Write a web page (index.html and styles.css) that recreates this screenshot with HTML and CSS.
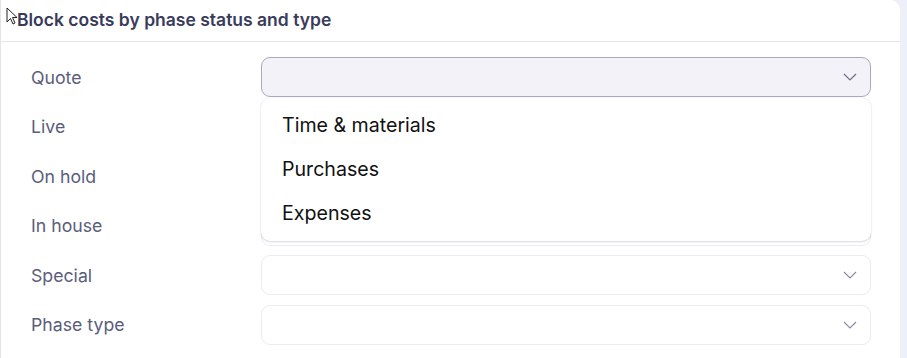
FILE: index.html
```html
<!DOCTYPE html>
<html lang="en">
    <head>
        <meta charset="UTF-8">
        <title>Block costs</title>
    <link rel="stylesheet" href="styles.css">
    </head>
    <body>
        <div class="card">
            <div class="card-header">Block costs by phase status and type</div>
            <div class="card-body">
                <div class="row">
                    <div class="label">Quote</div>
                    <div class="select-wrap">
                        <div class="select open">
                            <svg class="chevron" width="14" height="8" viewBox="0 0 14 8"><path d="M1 1 L7 7 L13 1" fill="none" stroke="#6e6c88" stroke-width="1.2"/></svg>
                        </div>
                        <div class="menu">
                            <div class="option">Time &amp; materials</div>
                            <div class="option">Purchases</div>
                            <div class="option">Expenses</div>
                        </div>
                    </div>
                </div>
                <div class="row">
                    <div class="label">Live</div>
                    <div class="select"></div>
                </div>
                <div class="row">
                    <div class="label">On hold</div>
                    <div class="select"></div>
                </div>
                <div class="row">
                    <div class="label">In house</div>
                    <div class="select"></div>
                </div>
                <div class="row">
                    <div class="label">Special</div>
                    <div class="select">
                        <svg class="chevron" width="14" height="8" viewBox="0 0 14 8"><path d="M1 1 L7 7 L13 1" fill="none" stroke="#8a89a0" stroke-width="1.1"/></svg>
                    </div>
                </div>
                <div class="row">
                    <div class="label">Phase type</div>
                    <div class="select">
                        <svg class="chevron" width="14" height="8" viewBox="0 0 14 8"><path d="M1 1 L7 7 L13 1" fill="none" stroke="#8a89a0" stroke-width="1.1"/></svg>
                    </div>
                </div>
            </div>
        </div>

        <svg class="cursor" width="14" height="20" viewBox="0 0 14 20"><path d="M1 1 L1 15 L4.5 11.5 L7 17 L9 16 L6.5 10.5 L11 10.5 Z" fill="#fff" stroke="#222" stroke-width="1"/></svg>
    </body>
</html>
```

FILE: styles.css
```css
        html, body {
            margin: 0;
            height: 100%;
        }

        body {
            background-color: #eef0f9;
            font-family: Inter, "Noto Sans", sans-serif;
            overflow: hidden;
        }

        .card {
            width: 900px;
            height: 100%;
            background-color: #fff;
            border-left: 1px solid #e3e3ec;
            border-top-right-radius: 10px;
            box-sizing: border-box;
        }

        .card-header {
            height: 41px;
            line-height: 40px;
            padding-left: 16px;
            border-bottom: 1px solid #e4e4ec;
            font-size: 17.5px;
            font-weight: 600;
            color: #383b5b;
        }

        /* Form rows */

        .card-body {
            display: flex;
            flex-direction: column;
            gap: 9.5px;
            padding: 15px 29px 0 30px;
        }

        .row {
            display: grid;
            grid-template-columns: 230px 610px;
            align-items: center;
        }

        .label {
            font-size: 17.7px;
            color: #5a5d7c;
        }

        .select-wrap {
            position: relative;
        }

        .select {
            height: 40px;
            border: 1px solid #ebebf3;
            border-radius: 9px;
            box-sizing: border-box;
            display: flex;
            align-items: center;
            justify-content: flex-end;
            padding-right: 13px;
        }

        .select.open {
            background-color: #f3f2f9;
            border-color: #aba8c2;
        }

        /* Open dropdown */

        .menu {
            position: absolute;
            top: 41px;
            left: 0;
            right: 0;
            z-index: 2;
            background-color: #fff;
            border-radius: 9px;
            padding: 5px 0 6px;
            box-shadow: 0 1px 2px rgba(60, 60, 100, 0.18), 0 0 1px rgba(60, 60, 100, 0.2);
        }

        .option {
            height: 44px;
            line-height: 44px;
            padding-left: 21px;
            font-size: 19.6px;
            color: #111;
        }

        .cursor {
            position: absolute;
            left: 6px;
            top: 7px;
        }
```
